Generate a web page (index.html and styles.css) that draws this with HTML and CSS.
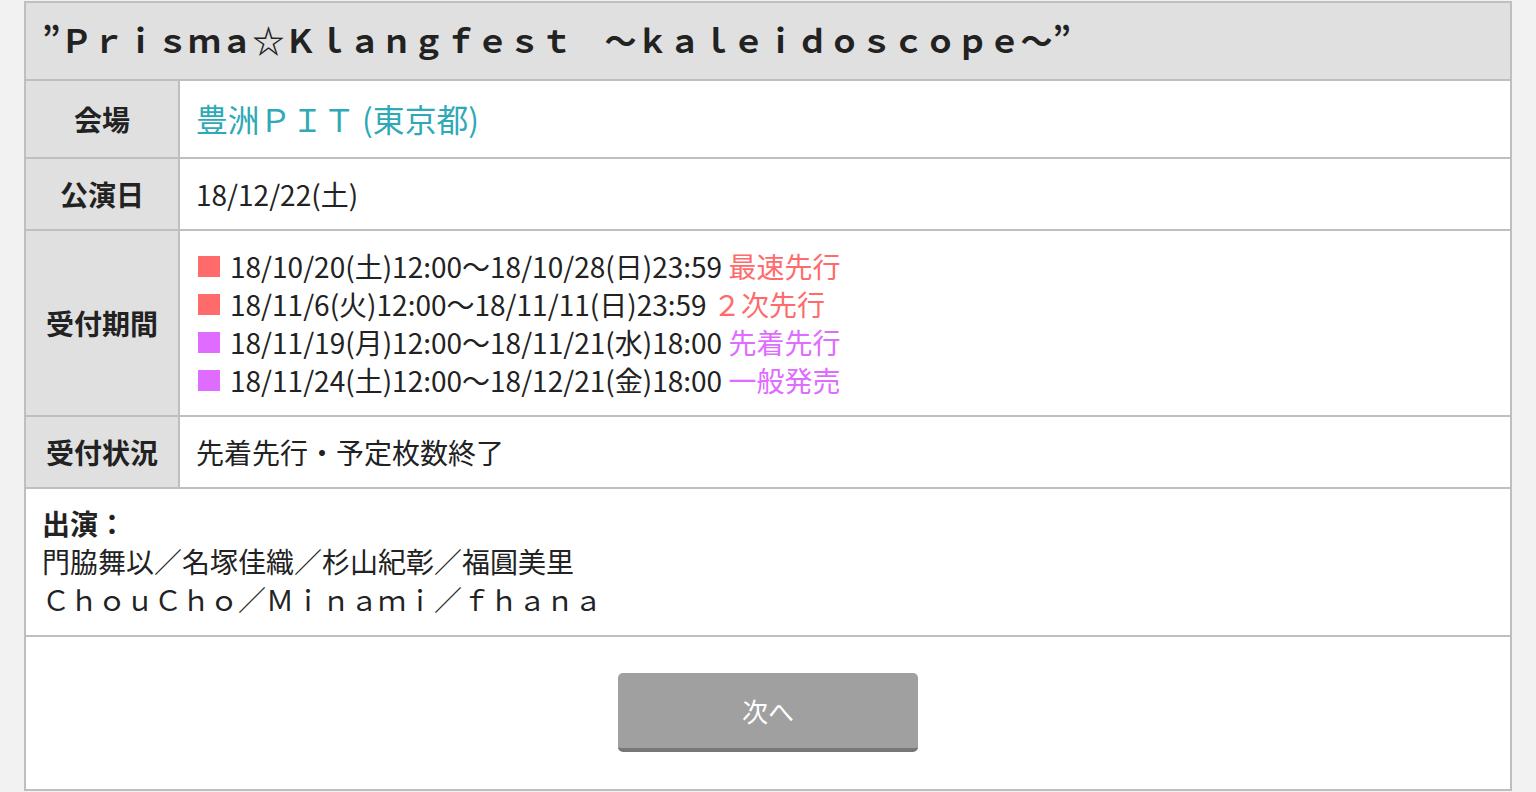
FILE: index.html
```html
<!DOCTYPE html>
<html lang="ja">
<head>
<meta charset="utf-8">
<title>Prisma☆Klangfest</title>
<link rel="stylesheet" href="styles.css">
</head>
<body>
<div class="card">
  <div class="title">”Ｐｒｉｓｍａ☆Ｋｌａｎｇｆｅｓｔ　～ｋａｌｅｉｄｏｓｃｏｐｅ～”</div>
  <div class="row">
    <div class="label">会場</div>
    <div class="value venue">豊洲ＰＩＴ (東京都)</div>
  </div>
  <div class="row">
    <div class="label">公演日</div>
    <div class="value">18/12/22(土)</div>
  </div>
  <div class="row">
    <div class="label">受付期間</div>
    <div class="value">
      <div class="period"><span class="mark red"></span>18/10/20(土)12:00～18/10/28(日)23:59 <span class="t-red">最速先行</span></div>
      <div class="period"><span class="mark red"></span>18/11/6(火)12:00～18/11/11(日)23:59 <span class="t-red">２次先行</span></div>
      <div class="period"><span class="mark pink"></span>18/11/19(月)12:00～18/11/21(水)18:00 <span class="t-pink">先着先行</span></div>
      <div class="period"><span class="mark pink"></span>18/11/24(土)12:00～18/12/21(金)18:00 <span class="t-pink">一般発売</span></div>
    </div>
  </div>
  <div class="row">
    <div class="label">受付状況</div>
    <div class="value">先着先行・予定枚数終了</div>
  </div>
  <div class="performers">
    <div class="perf-head">出演：</div>
    <div>門脇舞以／名塚佳織／杉山紀彰／福圓美里</div>
    <div>ＣｈｏｕＣｈｏ／Ｍｉｎａｍｉ／ｆｈａｎａ</div>
  </div>
  <div class="actions">
    <button class="next" type="button">次へ</button>
  </div>
</div>
</body>
</html>
```

FILE: styles.css
```css
html, body {
  margin: 0;
  padding: 0;
  background: #f2f2f2;
}
body {
  font-family: "Noto Sans CJK JP", "Noto Sans", sans-serif;
  color: #222;
  font-size: 28px;
  line-height: 38px;
}
.card {
  margin: 1px 24px 0;
  border: 2px solid #bfbfbf;
  background: #fff;
}
.title {
  background: #e0e0e0;
  padding: 14px 16px 18px;
  font-size: 32px;
  line-height: 44px;
  font-weight: bold;
  border-bottom: 2px solid #bfbfbf;
  white-space: nowrap;
}
.row {
  display: grid;
  grid-template-columns: 154px 1fr;
  border-bottom: 2px solid #bfbfbf;
}
.label {
  background: #e0e0e0;
  border-right: 2px solid #bfbfbf;
  display: flex;
  align-items: center;
  justify-content: center;
  font-weight: bold;
}
.value {
  padding: 16px 16px;
}
.venue {
  color: #30a9b7;
  font-size: 31.8px;
  line-height: 44px;
  padding-top: 15px;
  padding-bottom: 17px;
}
.period {
  display: flex;
  align-items: center;
  white-space: pre;
}
.mark {
  display: inline-block;
  width: 22px;
  height: 21px;
  margin: 0 10px 0 2px;
}
.mark.red { background: #ff6b6b; }
.mark.pink { background: #e06bff; }
.t-red { color: #ff6b6b; }
.t-pink { color: #e06bff; }
.performers {
  padding: 15px 16px 17px;
  border-bottom: 2px solid #bfbfbf;
}
.perf-head {
  font-weight: bold;
}
.actions {
  padding: 36px 0 37px;
  display: flex;
  justify-content: center;
}
.next {
  width: 300px;
  height: 79px;
  border: none;
  border-bottom: 4px solid #777;
  border-radius: 5px;
  background: #a0a0a0;
  color: #fff;
  font-family: "Noto Sans CJK JP", sans-serif;
  font-size: 26px;
  padding: 0;
}
```
